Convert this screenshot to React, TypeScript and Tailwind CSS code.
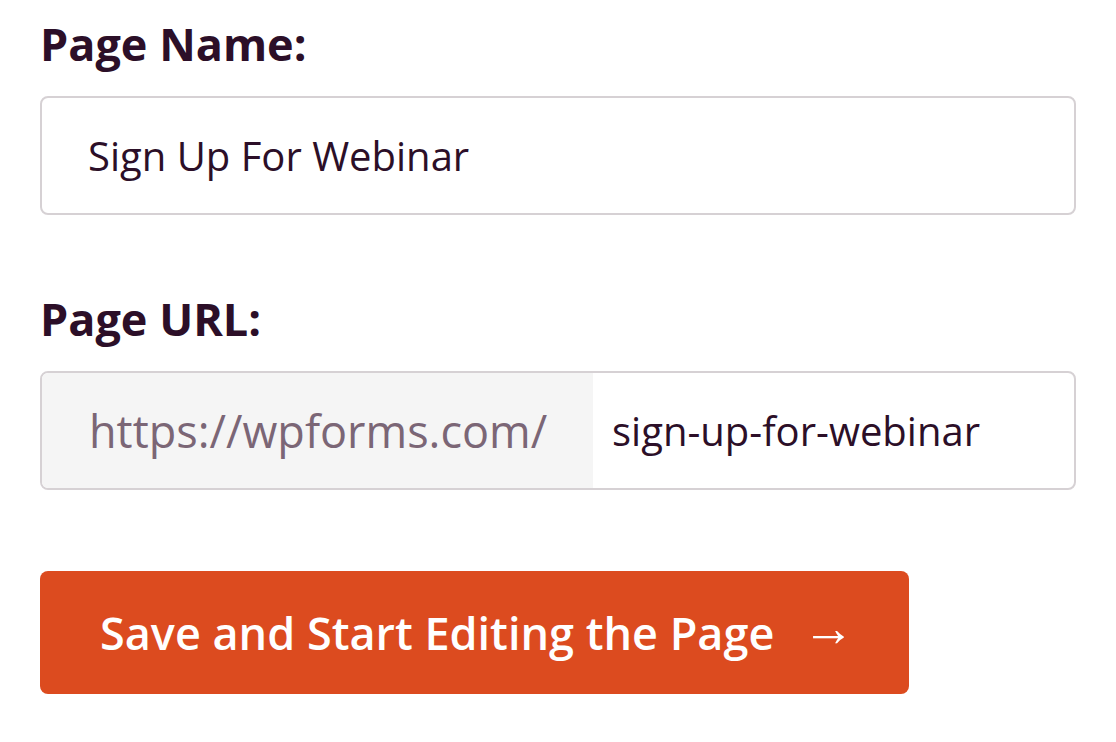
export default function App() {
  return (
    <div className="min-h-screen bg-white px-10 pt-[14px] font-['Open_Sans',sans-serif] text-[#2c0f28]">
      <label className="block text-[45px] font-bold leading-[60px]">Page Name:</label>
      <div className="mt-[22px] flex h-[119px] w-[1036px] items-center rounded-lg border-2 border-[#d6d1d4] px-[46px]">
        <span className="text-[40px]">Sign Up For Webinar</span>
      </div>

      <label className="mt-[74px] block text-[45px] font-bold leading-[60px]">Page URL:</label>
      <div className="mt-[22px] flex h-[119px] w-[1036px] overflow-hidden rounded-lg border-2 border-[#d6d1d4]">
        <div className="flex w-[551px] items-center bg-[#f5f5f5] pl-[47px] text-[45px] text-[#7b6676]">
          https://wpforms.com/
        </div>
        <div className="flex items-center pl-[19px] text-[40px]">sign-up-for-webinar</div>
      </div>

      <button className="mt-[81px] flex h-[123px] w-[869px] items-center rounded-lg bg-[#dc4b1f] pl-[60px] text-[45px] font-semibold text-white">
        Save and Start Editing the Page
        <span className="ml-[28px] -translate-y-[5px] font-['Liberation_Sans',sans-serif] text-[52px] font-normal leading-none">→</span>
      </button>
    </div>
  );
}
